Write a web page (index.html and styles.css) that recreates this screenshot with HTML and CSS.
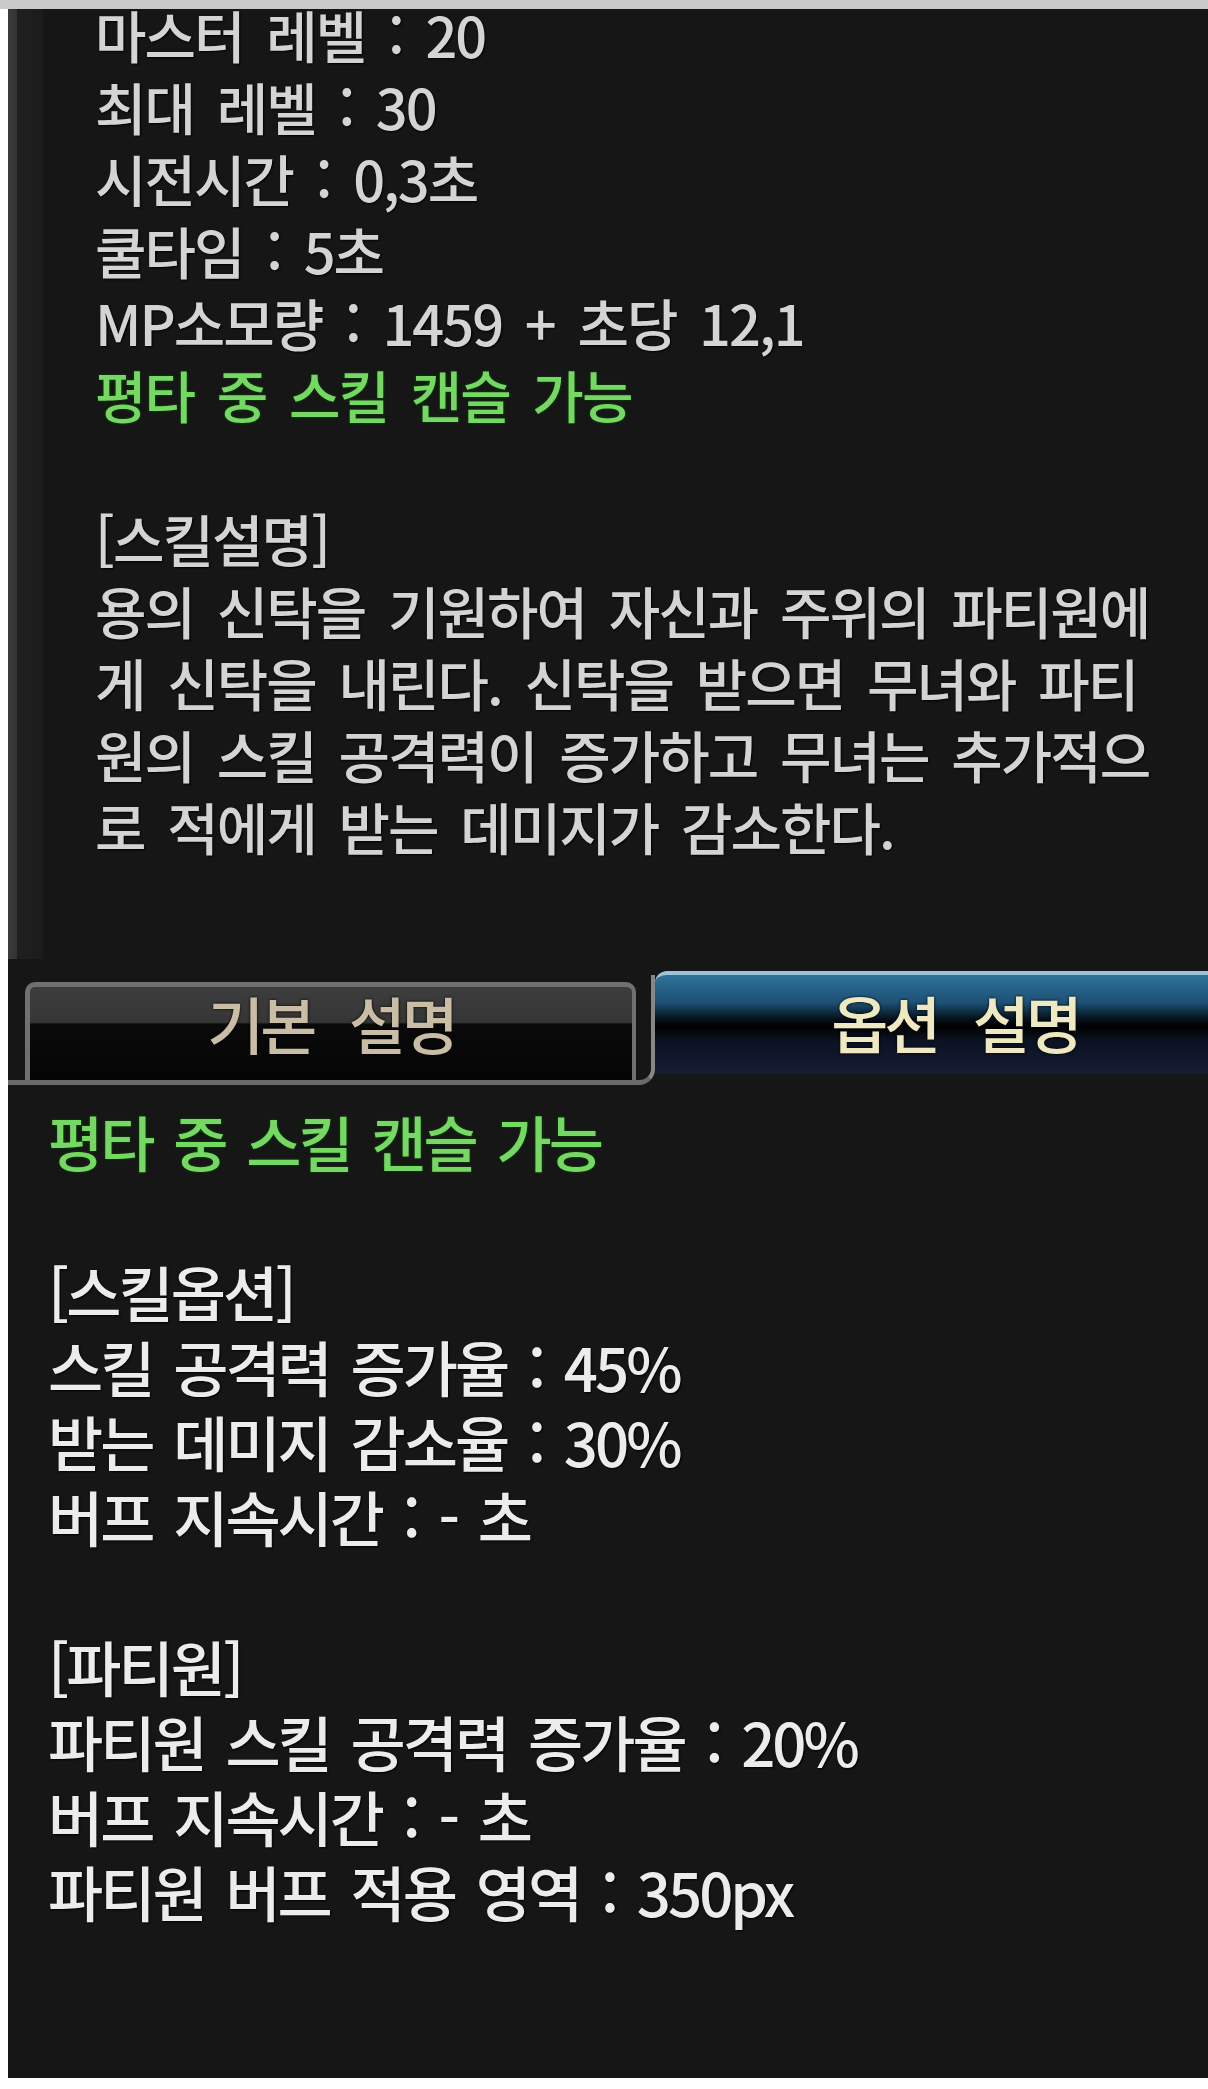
FILE: index.html
```html
<!DOCTYPE html>
<html lang="ko">
<head>
  <meta charset="UTF-8" />
  <meta name="viewport" content="width=device-width, initial-scale=1.0"/>
  <title>스킬 툴팁 | 용의 신탁</title>
  <link rel="stylesheet" href="styles.css">
</head>
<body>
  <div class="tooltip">
    <div class="info">
      <div class="lines">
        <div>마스터 레벨 : 20</div>
        <div>최대 레벨 : 30</div>
        <div>시전시간 : 0,3초</div>
        <div>쿨타임 : 5초</div>
        <div>MP소모량 : 1459 + 초당 12,1</div>
        <div class="green">평타 중 스킬 캔슬 가능</div>
        <div class="blank"></div>
        <div>[스킬설명]</div>
        <div>용의 신탁을 기원하여 자신과 주위의 파티원에</div>
        <div>게 신탁을 내린다. 신탁을 받으면 무녀와 파티</div>
        <div>원의 스킬 공격력이 증가하고 무녀는 추가적으</div>
        <div>로 적에게 받는 데미지가 감소한다.</div>
      </div>
    </div>

    <div class="tabs">
      <div class="tab-side">
        <div class="tab">기본 설명</div>
      </div>
      <div class="tab tab-active">옵션 설명</div>
    </div>

    <div class="options">
      <div class="green">평타 중 스킬 캔슬 가능</div>
      <div class="blank"></div>
      <div>[스킬옵션]</div>
      <div>스킬 공격력 증가율 : 45%</div>
      <div>받는 데미지 감소율 : 30%</div>
      <div>버프 지속시간 : - 초</div>
      <div class="blank"></div>
      <div>[파티원]</div>
      <div>파티원 스킬 공격력 증가율 : 20%</div>
      <div>버프 지속시간 : - 초</div>
      <div>파티원 버프 적용 영역 : 350px</div>
    </div>
  </div>
</body>
</html>
```

FILE: styles.css
```css
body {
  margin: 0;
  border-top: 9px solid #c9c9c9;
  background-color: #fff;
  font-family: "Noto Sans CJK KR", "Noto Sans", sans-serif;
  font-weight: 500;
}

.tooltip {
  margin-left: 8px;
  min-height: 2080px;
  background-color: #161616;
}

.info {
  padding: 0 0 97px 87px;
  background: linear-gradient(to right, #3b3b3b 0, #333 9px, #1f1f1f 9px, #1c1c1c 35px, #161616 35px);
}

.lines {
  margin-top: -11px;
  font-size: 56px;
  line-height: 72px;
  letter-spacing: -2px;
  word-spacing: 9px;
  color: #d4d4d4;
  text-shadow: 1px 1px 2px #000;
}

.blank {
  height: 72px;
}

.green {
  color: #74d862;
  text-shadow: 0 0 3px #0c4a07;
}

.tabs {
  display: flex;
  align-items: flex-end;
  height: 126px;
}

.tab-side {
  display: flex;
  align-items: flex-end;
  box-sizing: border-box;
  width: 647px;
  height: 110px;
  padding: 0 15px 0 17px;
  border-right: 4px solid #878787;
  border-bottom: 5px solid #6a6a6a;
  border-bottom-right-radius: 16px;
}

.tab {
  display: flex;
  align-items: center;
  justify-content: center;
  box-sizing: border-box;
  flex: 1;
  height: 98px;
  padding-bottom: 21px;
  border: 5px solid #707070;
  border-right-width: 4px;
  border-bottom: none;
  border-radius: 10px 10px 0 0;
  background: linear-gradient(#3d3d3d, #363636 38%, #0a0a0a 40%, #050505);
  font-size: 62px;
  line-height: 54px;
  letter-spacing: -4px;
  word-spacing: 22px;
  color: #c9bda6;
  text-shadow: 0 0 3px #000;
}

.tab-active {
  flex: 1;
  height: 103px;
  margin-bottom: 11px;
  padding: 0 0 5px 47px;
  border: none;
  border-top: 4px solid #9cc3d9;
  border-radius: 12px 0 0 0;
  background: linear-gradient(to bottom, #2f7299 0%, #1d5074 28%, #06121c 44%, #000 52%, #0b1222 66%, #151c35 100%);
  color: #efe9c2;
}

.options {
  padding: 18px 0 0 40px;
  font-size: 60px;
  line-height: 75px;
  letter-spacing: -3px;
  word-spacing: 7px;
  color: #ececec;
  text-shadow: 1px 1px 2px #000;
}

.options .blank {
  height: 75px;
}
```
